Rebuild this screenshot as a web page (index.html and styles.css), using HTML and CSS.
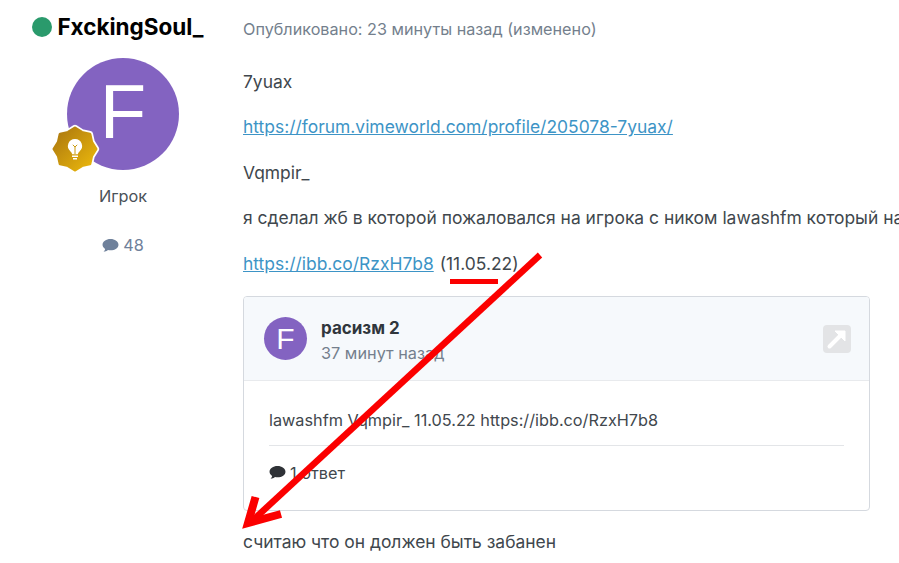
FILE: index.html
```html
<!DOCTYPE html>
<html lang="ru">
<head>
<meta charset="utf-8">
<title>Post</title>
<link rel="stylesheet" href="styles.css">
</head>
<body>
<div class="post">
  <aside class="author">
    <h3 class="name"><span class="dot"></span>FxckingSoul_</h3>
    <div class="avatar-wrap">
      <div class="avatar">F</div>
      <svg class="badge" viewBox="0 0 48 48" width="48" height="48">
        <defs>
          <linearGradient id="gold" x1="0" y1="0" x2="1" y2="1">
            <stop offset="0" stop-color="#a9750f"/>
            <stop offset="1" stop-color="#eebb0c"/>
          </linearGradient>
        </defs>
        <path d="M24 3 30.890 7.370 38.850 9.150 40.630 17.110 45 24 40.630 30.890 38.850 38.850 30.890 40.630 24 45 17.110 40.630 9.150 38.850 7.370 30.890 3 24 7.370 17.110 9.150 9.150 17.110 7.370Z" fill="#fff" stroke="#fff" stroke-width="6.500" stroke-linejoin="round"/>
        <path d="M24 3 30.890 7.370 38.850 9.150 40.630 17.110 45 24 40.630 30.890 38.850 38.850 30.890 40.630 24 45 17.110 40.630 9.150 38.850 7.370 30.890 3 24 7.370 17.110 9.150 9.150 17.110 7.370Z" fill="url(#gold)" stroke="url(#gold)" stroke-width="3" stroke-linejoin="round"/>
        <path d="M24 14a7 7 0 0 0-4.500 12.400c1 .9 1.400 1.700 1.600 2.800h5.800c.2-1.100.6-1.900 1.600-2.800A7 7 0 0 0 24 14Z" fill="#fff"/>
        <path d="M21 30.500h6v1.500h-6zM22 33h4v1.500h-4z" fill="#fff"/>
        <path d="M24 29v-7M21.800 19.800 24 22l2.200-2.200" stroke="#c99a10" stroke-width="1" fill="none"/>
      </svg>
    </div>
    <div class="rank">Игрок</div>
    <div class="count">
      <svg class="bubble" viewBox="0 0 18 16" width="17" height="15"><path d="M9 1C4.300 1 .5 3.700.5 7.100c0 1.800 1.100 3.400 2.800 4.500-.2 1.100-.9 2.200-1.800 3 1.900-.1 3.600-.8 4.800-1.800.9.200 1.800.3 2.700.3 4.700 0 8.500-2.700 8.500-6S13.700 1 9 1Z" fill="#6f819b"/></svg>
      48
    </div>
  </aside>
  <main class="content">
    <div class="meta">Опубликовано: 23 минуты назад (изменено)</div>
    <p>7yuax</p>
    <p><a href="#">https://forum.vimeworld.com/profile/205078-7yuax/</a></p>
    <p>Vqmpir_</p>
    <p>я сделал жб в которой пожаловался на игрока с ником lawashfm который на</p>
    <p><a href="#">https://ibb.co/RzxH7b8</a> <span class="date">(11.05.22)</span></p>
    <section class="embed">
      <header class="embed-head">
        <div class="embed-avatar">F</div>
        <div class="embed-title">
          <div class="embed-name">расизм 2</div>
          <div class="embed-time">37 минут назад</div>
        </div>
        <svg class="embed-link" viewBox="0 0 28 28" width="28" height="28">
          <rect width="28" height="28" rx="4" fill="#e3e4e6"/>
          <path d="M6.500 21.500 18 10" stroke="#fff" stroke-width="4" stroke-linecap="round"/>
          <path d="M12 6h10v10Z" fill="#fff" stroke="#fff" stroke-linejoin="round"/>
        </svg>
      </header>
      <div class="embed-body">
        <div class="embed-text">lawashfm Vqmpir_ 11.05.22 https://ibb.co/RzxH7b8</div>
        <div class="embed-foot">
          <svg viewBox="0 0 18 16" width="17" height="15"><path d="M9 1C4.300 1 .5 3.700.5 7.100c0 1.800 1.100 3.400 2.800 4.500-.2 1.100-.9 2.200-1.800 3 1.900-.1 3.600-.8 4.800-1.800.9.200 1.800.3 2.700.3 4.700 0 8.500-2.700 8.500-6S13.700 1 9 1Z" fill="#2f3237"/></svg>
          1 ответ
        </div>
      </div>
    </section>
    <p class="last">считаю что он должен быть забанен</p>
  </main>
</div>
<svg class="markup" viewBox="0 0 899 563" width="899" height="563">
  <path d="M450 281.500H498" stroke="#fb0000" stroke-width="5"/>
  <path d="M540 255 252 521" stroke="#fb0000" stroke-width="6.500"/>
  <path d="M255.500 497 248 523 281 514" stroke="#fb0000" stroke-width="8" fill="none"/>
</svg>
</body>
</html>
```

FILE: styles.css
```css
* { box-sizing: border-box; }
html, body { margin: 0; height: 563px; overflow: hidden; background: #fff; }
body {
  position: relative;
  width: 899px;
  font-family: Inter, "Liberation Sans", sans-serif;
  font-size: 17.450px;
  line-height: 25.600px;
  color: #40474d;
}
.post { display: flex; padding-top: 14px; }
.author { width: 243px; flex: none; display: flex; flex-direction: column; align-items: center; padding-left: 18px; padding-right: 15px; }
.name {
  margin: 0 10px 0 0;
  display: flex;
  align-items: center;
  gap: 5px;
  font-size: 22.500px;
  line-height: 26px;
  font-weight: 700;
  color: #000;
  white-space: nowrap;
}
.dot { width: 20px; height: 20px; border-radius: 50%; background: #2a9a6c; }
.avatar-wrap { position: relative; width: 112px; height: 112px; margin-top: 18px; }
.avatar {
  width: 112px; height: 112px; border-radius: 50%;
  background: #8363c1; color: #fff;
  display: flex; align-items: center; justify-content: center;
  padding-bottom: 4px;
  font-family: "Liberation Sans", sans-serif;
  font-size: 76px; line-height: 1; font-weight: 400;
}
.badge { position: absolute; left: -16px; top: 67px; overflow: visible; }
.rank { margin-top: 14px; font-size: 16.300px; line-height: 24px; color: #4a5158; }
.count { margin-top: 25px; display: flex; align-items: center; gap: 4px; font-size: 16.300px; line-height: 24px; color: #6f819b; }
.content { flex: none; width: 656px; white-space: nowrap; }
.meta { font-size: 16.200px; line-height: 30px; color: #747f8d; }
.content p { margin: 0 0 19.800px; }
.meta + p { margin-top: 25px; }
.content a { color: #3d94c6; text-decoration: underline; }
.date { margin-left: 1px; }
.embed {
  width: 627px; height: 215px;
  border: 1px solid #d5d9df; border-radius: 4px;
  overflow: hidden;
  margin-top: 19.500px;
}
.embed-head {
  height: 84px;
  display: flex; align-items: center;
  padding: 1px 18px 0 20px;
  background: #f6f9fc;
  border-bottom: 1px solid #e8eaed;
}
.embed-avatar {
  width: 43px; height: 43px; border-radius: 50%;
  background: #8363c1; color: #fff; flex: none;
  display: flex; align-items: center; justify-content: center;
  font-family: "Liberation Sans", sans-serif;
  font-size: 30px; line-height: 1;
}
.embed-title { margin-left: 14px; flex: 1; padding-top: 3px; }
.embed-name { font-weight: 700; font-size: 17px; line-height: 24px; color: #30363c; }
.embed-time { font-size: 16.300px; line-height: 24px; color: #747f8d; margin-top: 1px; }
.embed-link { flex: none; }
.embed-body { padding: 27px 25px 0; }
.embed-text { font-size: 16.250px; line-height: 24px; padding-bottom: 13px; border-bottom: 1px solid #e3e5e8; color: #41474d; }
.embed-foot { margin-top: 15px; display: flex; align-items: center; gap: 4px; font-size: 16.250px; line-height: 24px; color: #41474d; }
.content .last { margin-top: 18px; margin-bottom: 0; }
.markup { position: absolute; left: 0; top: 0; pointer-events: none; }
```
